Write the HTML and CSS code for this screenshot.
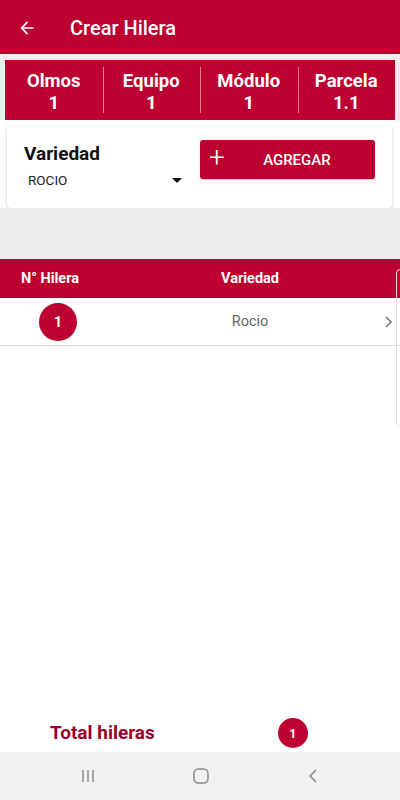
FILE: index.html
```html
<!DOCTYPE html>
<html lang="es">
<head>
    <meta charset="UTF-8">
    <meta name="viewport" content="width=device-width, initial-scale=1.0">
    <title>Crear Hilera</title>
    <link rel="stylesheet" href="styles.css">
</head>
<body>
    <div class="screen">
        <header class="appbar">
            <svg class="back" width="20" height="20" viewBox="0 0 24 24">
                <path d="M20 11H7.83l5.59-5.59L12 4l-8 8 8 8 1.41-1.41L7.83 13H20v-2z" fill="#fff"/>
            </svg>
            <h1>Crear Hilera</h1>
        </header>

        <div class="stats">
            <div class="stat"><span>Olmos</span><span>1</span></div>
            <div class="stat"><span>Equipo</span><span>1</span></div>
            <div class="stat"><span>Módulo</span><span>1</span></div>
            <div class="stat"><span>Parcela</span><span>1.1</span></div>
        </div>

        <div class="card">
            <div class="field">
                <label>Variedad</label>
                <div class="select">
                    <span>ROCIO</span>
                    <span class="caret"></span>
                </div>
            </div>
            <button class="add-btn">
                <span class="plus">+</span>
                <span class="add-text">AGREGAR</span>
            </button>
        </div>

        <div class="table">
            <div class="thead">
                <div class="col-num">N° Hilera</div>
                <div class="col-var">Variedad</div>
            </div>
            <div class="row">
                <div class="col-num"><span class="circle">1</span></div>
                <div class="col-var">Rocio</div>
                <svg class="chevron" width="10" height="14" viewBox="0 0 10 14">
                    <path d="M2 2l5 5-5 5" fill="none" stroke="#777" stroke-width="1.6"/>
                </svg>
            </div>
            <div class="scroll-hint"></div>
        </div>

        <div class="total">
            <span class="total-label">Total hileras</span>
            <span class="total-badge">1</span>
        </div>

        <nav class="navbar">
            <svg width="16" height="16" viewBox="0 0 16 16">
                <path d="M3 2v12M8 2v12M13 2v12" stroke="#888" stroke-width="1.4"/>
            </svg>
            <svg width="18" height="18" viewBox="0 0 18 18">
                <rect x="2" y="2" width="14" height="14" rx="4.5" fill="none" stroke="#888" stroke-width="1.5"/>
            </svg>
            <svg width="16" height="16" viewBox="0 0 16 16">
                <path d="M11 2L5 8l6 6" fill="none" stroke="#888" stroke-width="1.5"/>
            </svg>
        </nav>
    </div>
</body>
</html>
```

FILE: styles.css
```css
body {
    margin: 0;
    font-family: Roboto, "Noto Sans", sans-serif;
    background: #fff;
}
.screen {
    width: 400px;
    height: 800px;
    display: flex;
    flex-direction: column;
    background: #fff;
    overflow: hidden;
}
.appbar {
    height: 54px;
    background: #bc0030;
    display: flex;
    align-items: center;
    padding-left: 17px;
    padding-top: 2px;
    box-sizing: border-box;
    flex-shrink: 0;
}
.appbar h1 {
    margin: 0 0 0 33px;
    color: #fff;
    font-size: 20px;
    font-weight: 500;
}
.stats {
    background: #eeeeee;
    padding: 6px 5px 0;
    display: flex;
}
.stats .stat {
    flex: 1;
    background: #bc0030;
    height: 60px;
    display: flex;
    flex-direction: column;
    align-items: center;
    justify-content: center;
    color: #fff;
    font-weight: 700;
    font-size: 18.5px;
    line-height: 22px;
    padding-top: 4px;
    box-sizing: border-box;
    position: relative;
}
.stats .stat + .stat::before {
    content: "";
    position: absolute;
    left: 0;
    top: 7px;
    bottom: 7px;
    width: 1px;
    background: #e67d95;
}
.card {
    background: #fff;
    margin: 6px 8px 0 7px;
    height: 82px;
    border-radius: 4px;
    box-shadow: 0 1px 3px rgba(0, 0, 0, 0.25);
    display: flex;
    align-items: flex-start;
    padding: 14px 16px 0 17px;
    box-sizing: border-box;
}
.field {
    width: 160px;
}
.field label {
    display: block;
    font-size: 19px;
    font-weight: 700;
    color: #111;
    margin-top: 2px;
}
.select {
    display: flex;
    align-items: center;
    justify-content: space-between;
    margin-top: 7px;
    padding-left: 4px;
    font-size: 13.5px;
    color: #222;
}
.caret {
    width: 0;
    height: 0;
    border-left: 5px solid transparent;
    border-right: 5px solid transparent;
    border-top: 5px solid #111;
    margin-right: 2px;
}
.add-btn {
    margin-left: 16px;
    width: 175px;
    height: 39px;
    border: none;
    border-radius: 3px;
    background: #bc0030;
    color: #fff;
    display: flex;
    align-items: center;
    padding: 0 0 0 9px;
    box-shadow: 0 1px 2px rgba(0, 0, 0, 0.2);
    font-family: inherit;
}
.add-btn .plus {
    font-size: 28px;
    font-weight: 300;
    line-height: 1;
    margin-top: -3px;
}
.add-btn .add-text {
    flex: 1;
    text-align: center;
    font-size: 15px;
    font-weight: 500;
    padding-right: 6px;
}
.table {
    position: relative;
    border-top: 51px solid #eeeeee;
    flex: 1;
}
.thead {
    height: 39px;
    background: #bc0030;
    display: flex;
    align-items: center;
    color: #fff;
    font-weight: 700;
    font-size: 14.5px;
}
.col-num {
    width: 100px;
    text-align: center;
}
.col-var {
    flex: 1;
    text-align: center;
}
.row {
    height: 47px;
    display: flex;
    align-items: center;
    border-bottom: 1px solid #ddd;
    position: relative;
    font-size: 14.5px;
    color: #666;
}
.circle {
    display: inline-flex;
    width: 38px;
    height: 38px;
    border-radius: 50%;
    background: #bc0030;
    color: #fff;
    font-weight: 700;
    font-size: 14px;
    align-items: center;
    justify-content: center;
    margin-left: 16px;
}
.chevron {
    position: absolute;
    right: 6px;
    top: 17px;
}
.scroll-hint {
    position: absolute;
    right: -4px;
    top: 10px;
    width: 6px;
    height: 156px;
    border: 1px solid #ddd;
    border-radius: 5px;
}
.total {
    height: 45px;
    display: flex;
    align-items: flex-start;
    padding-left: 50px;
    box-sizing: border-box;
}
.total-label {
    color: #9c0028;
    font-weight: 700;
    font-size: 19px;
    margin-top: 16px;
    line-height: 1;
}
.total-badge {
    width: 30px;
    height: 30px;
    border-radius: 50%;
    background: #bc0030;
    color: #fff;
    font-weight: 700;
    font-size: 12.5px;
    display: flex;
    align-items: center;
    justify-content: center;
    margin-left: 123px;
    margin-top: 11px;
}
.navbar {
    height: 48px;
    background: #f1f1f1;
    display: flex;
    align-items: center;
    justify-content: space-between;
    padding: 0 79px 0 80px;
    flex-shrink: 0;
}
```
